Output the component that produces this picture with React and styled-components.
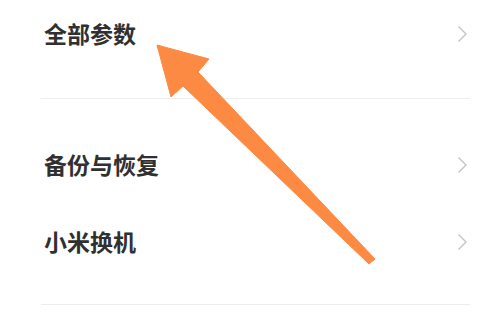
import React from "react";
import styled, { createGlobalStyle } from "styled-components";

const Global = createGlobalStyle`
  html, body { margin: 0; padding: 0; background: #ffffff; }
  body { font-family: "Noto Sans CJK SC", "Noto Sans", sans-serif; }
`;

const Page = styled.div`
  position: relative;
  width: 499px;
  height: 335px;
  overflow: hidden;
  background: #ffffff;
`;

const List = styled.div`
  display: flex;
  flex-direction: column;
  margin-top: -31px;
`;

const Section = styled.div`
  display: flex;
  flex-direction: column;
  padding: ${(p) => (p.$first ? "26px 0 26px" : "27px 0 24px")};
`;

const Divider = styled.div`
  height: 1px;
  margin: 0 29px 0 41px;
  background: #ededed;
`;

const Row = styled.div`
  height: 77px;
  display: flex;
  align-items: center;
  justify-content: space-between;
  padding: 0 31px 0 44px;
`;

const Label = styled.span`
  font-size: 23px;
  font-weight: 700;
  color: #303030;
  letter-spacing: 0;
  line-height: 1;
`;

const Chevron = () => (
  <svg width="11" height="18" viewBox="0 0 11 18">
    <path d="M1.5 1.5 L9 9 L1.5 16.5" fill="none" stroke="#c4c4c4" strokeWidth="1.4" />
  </svg>
);

const Overlay = styled.svg`
  position: absolute;
  left: 0;
  top: 0;
  pointer-events: none;
`;

const items = [["全部参数"], ["备份与恢复", "小米换机"]];

export default function App() {
  return (
    <>
      <Global />
      <Page>
        <List>
          {items.map((group, gi) => (
            <React.Fragment key={gi}>
              <Section $first={gi === 0}>
                {group.map((t) => (
                  <Row key={t}>
                    <Label>{t}</Label>
                    <Chevron />
                  </Row>
                ))}
              </Section>
              <Divider />
            </React.Fragment>
          ))}
        </List>
        <Overlay width="499" height="335" viewBox="0 0 499 335">
          <polygon
            points="157,45 209,59 198,72 375,259 369,264 183,86 171,97"
            fill="#fd8a42"
            stroke="#fd8a42"
            strokeWidth="1"
            strokeLinejoin="round"
          />
        </Overlay>
      </Page>
    </>
  );
}
